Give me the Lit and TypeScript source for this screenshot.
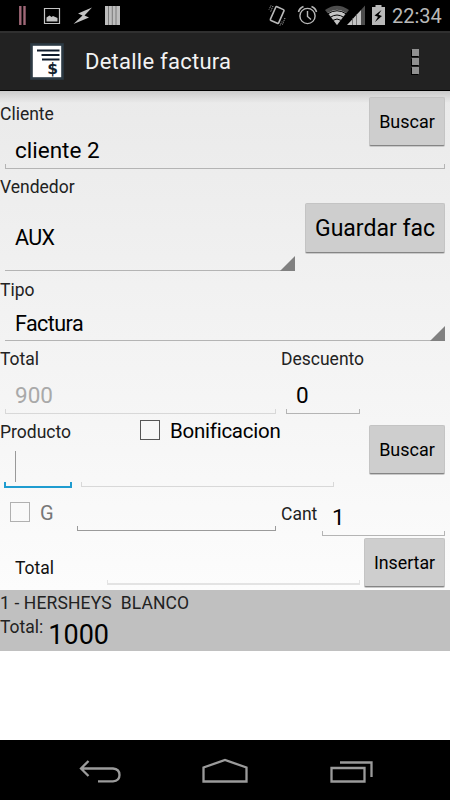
import { LitElement, html, css } from "lit";
import { customElement } from "lit/decorators.js";

@customElement("status-bar")
class StatusBar extends LitElement {
  static styles = css`
    :host { display: flex; height: 31px; background: #000; color: #b9b9b9; }
    svg { flex: none; display: block; width: 392px; height: 31px; }
    .clock { font-size: 20px; line-height: 31px; padding-top: 1px; }
  `;
  render() {
    return html`
      <svg viewBox="0 0 392 31">
        <path d="M20.300 6v19M24.500 6v19" stroke="#a06878" stroke-width="2.400"/>
        <path d="M44.500 8.500h15v15h-15z" fill="none" stroke="#c4c4c4" stroke-width="1.200"/>
        <path d="M46.500 21.500v-4l3-2 2 1.500 1.500-1 4.500 2v3.500z" fill="#c4c4c4"/>
        <path d="M92 7.500L78 13.500L82.500 15.500L73.500 24L89 17.500L84.500 15.500Z" fill="#c4c4c4"/>
        <path d="M105 6h15v19h-15z" fill="#bdbdbd"/>
        <path d="M108.500 6v19M112.300 6v19M116 6v19" stroke="#6a6a6a" stroke-width=".8"/>
        <g fill="none" stroke="#b9b9b9">
          <rect x="272.500" y="7.500" width="9" height="15" rx="1" transform="rotate(24 277 15.500)" stroke-width="1.600"/>
          <path d="M273 6l-2.500 6M271 5.500l-2 4M285 18l-2.500 6.500M280 25.500l2-4" stroke-dasharray="1 1"/>
          <circle cx="307.500" cy="16" r="7.600" stroke-width="1.400"/>
          <path d="M307.500 11v5.500l3.500 3" stroke-width="1.400"/>
          <path d="M298.500 12q1-4 5-5.500M316.500 12q-1-4-5-5.500" stroke-width="1.600"/>
        </g>
        <path d="M337 25L325 10Q337 1.500 349 10Z" fill="#4d4d4d"/>
        <path d="M337 25L328 13Q337 6.500 346 13Z" fill="#c4c4c4"/>
        <path d="M327.500 14Q337 7.500 346.500 14M330 17.500Q337 12.500 344 17.500M332.500 20.500Q337 17.500 341.500 20.500" fill="none" stroke="#000" stroke-width="1"/>
        <path d="M347 25L361 10V25Z" fill="#c4c4c4"/>
        <path d="M361 10L365 5.500V25H361Z" fill="#4d4d4d"/>
        <path d="M352.500 18v7M356.500 14v11" stroke="#555" stroke-width=".7"/>
        <path d="M372 7h3.500V5h6v2H385v18h-13z" fill="#b9b9b9"/>
        <path d="M381.500 10l-7 5.500 3.500 1.200-3 5.300 7-6-3.500-1.200z" fill="#000"/>
      </svg>
      <div class="clock">22:34</div>
    `;
  }
}

@customElement("action-bar")
class ActionBar extends LitElement {
  static styles = css`
    :host {
      display: flex; align-items: center; height: 60px; box-sizing: border-box;
      background: #222; border-top: 2px solid #303030; border-bottom: 1px solid #000; color: #f3f3f3;
    }
    .logo { width: 34px; height: 37px; margin-left: 30px; margin-top: -1px; }
    .title { font-size: 22px; line-height: 30px; padding-top: 1px; margin-left: 21px; flex: 1; letter-spacing: .25px; white-space: pre; }
    .menu { display: grid; gap: 2px; margin-right: 31px; }
    .menu i { width: 7px; height: 7px; background: #909090; box-shadow: -1px 1px 0 #000; }
  `;
  render() {
    return html`
      <svg class="logo" viewBox="0 0 34 37">
        <rect x="1.500" y="1.500" width="31" height="34" fill="#fff" stroke="#2c3a44" stroke-width="2.600"/>
        <path d="M7 7.500h22.500M11.500 12h18M12 16.500h17.500" stroke="#101c2c" stroke-width="2.200"/>
        <text x="17.300" y="31.300" font-family="DejaVu Sans, sans-serif" font-size="15.500" font-weight="700" fill="#14222e">$</text>
      </svg>
      <div class="title">Detalle factura</div>
      <div class="menu"><i></i><i></i><i></i></div>
    `;
  }
}

@customElement("nav-bar")
class NavBar extends LitElement {
  static styles = css`
    :host { display: block; height: 60px; background: #000; }
    svg { display: block; }
  `;
  render() {
    return html`
      <svg width="450" height="60" viewBox="0 0 450 60" fill="none" stroke="#9b9b9b" stroke-width="2.300">
        <path d="M81 28.500H113Q119.500 29 119.500 35T113 41.300H98M88.500 21L81 28.500L88.500 36"/>
        <path d="M203.500 41.500V27.500L225 20L246.500 27.500V41.500Z"/>
        <path d="M331.500 28h33v13.500h-33zM340 22.500h31.500V37"/>
      </svg>
    `;
  }
}

@customElement("app-root")
class AppRoot extends LitElement {
  static styles = css`
    :host {
      display: flex; flex-direction: column; width: 450px; height: 800px; overflow: hidden;
      font-family: Roboto, sans-serif; background: #fff; color: #000;
    }
    .form {
      height: 499px; flex: none; overflow: hidden;
      background: linear-gradient(#0002, #0000 12px), linear-gradient(#eaeaea, #fcfcfc);
    }
    .row { display: flex; align-items: flex-start; }
    .grow { flex: 1; }
    .label { font-size: 17.500px; line-height: 20px; color: #222; white-space: pre; }
    .value { font-size: 22.500px; line-height: 28px; padding-left: 10px; white-space: pre; }
    .pick { font-size: 21.500px; line-height: 26px; padding-left: 15px; letter-spacing: -.6px; }
    .btn {
      box-sizing: border-box; height: 49px; width: 76px; flex: none; margin-right: 5px;
      display: flex; align-items: center; justify-content: center; white-space: pre;
      font-size: 18px; background: #cecece; border: 1px solid #c4c4c4; border-bottom: 1px solid #858585;
      border-radius: 2px; box-shadow: 0 1px 0 #c9c9c9;
    }
    .btn.big { width: 140px; height: 50px; font-size: 23px; padding-top: 1px; }
    .btn.insert { width: 81px; font-size: 17.800px; }
    .line { box-sizing: border-box; height: 5px; border: 1px solid #b4b4b4; border-top: 0; flex: none; }
    .line.faint { border-color: #d8d8d8; }
    .line.dark { border-color: #9a9a9a; }
    .line.focus { border: 2px solid #1f9cd0; border-top: 0; height: 6px; }
    .spin { border-bottom: 1px solid #b4b4b4; display: flex; justify-content: flex-end; align-items: flex-end; flex: none; }
    .spin i { width: 15px; height: 15px; background: #808080; clip-path: polygon(100% 0, 100% 100%, 0 100%); margin-bottom: -1px; }
    .box { box-sizing: border-box; width: 20px; height: 20px; border: 1px solid #555; flex: none; }
    .box.off { border-color: #b0b0b0; }

    .client { height: 73px; }
    .client .label { margin-top: 13px; }
    .client .value { margin: 12px 0 0 5px; }
    .client .btn { margin-top: 6px; }
    .wide { margin: 0 5px; }
    .seller-label { padding-top: 8px; height: 20px; }
    .seller { height: 75px; }
    .seller .pick { box-sizing: border-box; width: 275px; padding-top: 28px; }
    .seller .btn { margin: 6px 5px 0 auto; }
    .seller .col { width: 295px; }
    .seller .pick + .spin { margin: 4px 0 0 5px; height: 15px; }
    .kind-label { padding-top: 8px; }
    .kind { padding-top: 11px; }
    .kind .pick { height: 15px; letter-spacing: -.55px; }
    .kind .spin { margin: -1px 5px 0; height: 15px; }
    .totals { height: 73px; }
    .totals .label { padding-top: 8px; }
    .totals .value { margin: 12px 0 0 5px; height: 28px; }
    .totals .left { width: 281px; }
    .totals .left .line { margin: 0 5px; }
    .totals .right .line { margin-left: 5px; width: 74px; }
    .muted { color: #a9a9a9; }
    .product { height: 74px; }
    .product .left { width: 369px; }
    .product .btn { margin-top: 11px; }
    .product .head { height: 33px; }
    .product .head .label { width: 140px; padding-top: 8px; }
    .product .head .box { margin-top: 6px; }
    .bonus { font-size: 20.500px; line-height: 26px; margin: 4px 0 0 10px; letter-spacing: -.25px; }
    .caret { width: 1px; height: 31px; margin: 4px 0 0 15px; background: #999; }
    .fields { display: flex; align-items: flex-end; gap: 9px; padding-left: 4px; height: 6px; }
    .fields .faint { margin-bottom: 1px; }
    .qty { height: 48px; }
    .qty .box { margin: 14px 0 0 10px; }
    .g { font-size: 20px; line-height: 26px; color: #777; margin: 12px 0 0 10px; width: 37px; }
    .qty .code { width: 199px; margin: 38px 5px 0 0; }
    .qty .label { width: 41px; padding-top: 16px; }
    .qty .amount { width: 123px; }
    .qty .value { margin-top: 15px; height: 28px; }
    .sum { height: 54px; }
    .sum .label { color: #111; padding: 22px 0 0 15px; width: 92px; }
    .sum .line { width: 253px; margin: 44px 4px 0 0; border-color: #e3e3e3; border-bottom-width: 2px; }
    .sum .btn { margin-top: 2px; }

    .item { height: 61px; flex: none; background: #c0c0c0; }
    .item .label { padding-top: 3px; letter-spacing: .13px; }
    .item .row .label { padding-top: 4px; letter-spacing: 0; }
    .price { font-size: 27px; line-height: 34px; margin: 5px 0 0 5px; }
    .rest { flex: 1; }
  `;
  render() {
    return html`
      <status-bar></status-bar>
      <action-bar></action-bar>
      <div class="form">
        <div class="row client">
          <div class="grow"><div class="label">Cliente</div><div class="value">cliente 2</div></div>
          <div class="btn">Buscar</div>
        </div>
        <div class="line wide"></div>
        <div class="label seller-label">Vendedor</div>
        <div class="row seller">
          <div class="col"><div class="pick">AUX</div><div class="spin"><i></i></div></div>
          <div class="btn big">Guardar fac</div>
        </div>
        <div class="label kind-label">Tipo</div>
        <div class="kind"><div class="pick">Factura</div><div class="spin"><i></i></div></div>
        <div class="row totals">
          <div class="left"><div class="label">Total</div><div class="value muted">900</div><div class="line faint"></div></div>
          <div class="right"><div class="label">Descuento</div><div class="value">0</div><div class="line"></div></div>
        </div>
        <div class="row product">
          <div class="left">
            <div class="row head"><div class="label">Producto</div><div class="box"></div><div class="bonus">Bonificacion</div></div>
            <div class="caret"></div>
            <div class="fields"><div class="line focus" style="width:68px"></div><div class="line faint" style="width:253px"></div></div>
          </div>
          <div class="btn">Buscar</div>
        </div>
        <div class="row qty">
          <div class="box off"></div><div class="g">G</div>
          <div class="line dark code"></div>
          <div class="label">Cant</div>
          <div class="amount"><div class="value">1</div><div class="line"></div></div>
        </div>
        <div class="row sum">
          <div class="label">Total</div><div class="line faint"></div><div class="btn insert">Insertar</div>
        </div>
      </div>
      <div class="item">
        <div class="label">1 - HERSHEYS  BLANCO</div>
        <div class="row"><div class="label">Total:</div><div class="price">1000</div></div>
      </div>
      <div class="rest"></div>
      <nav-bar></nav-bar>
    `;
  }
}
